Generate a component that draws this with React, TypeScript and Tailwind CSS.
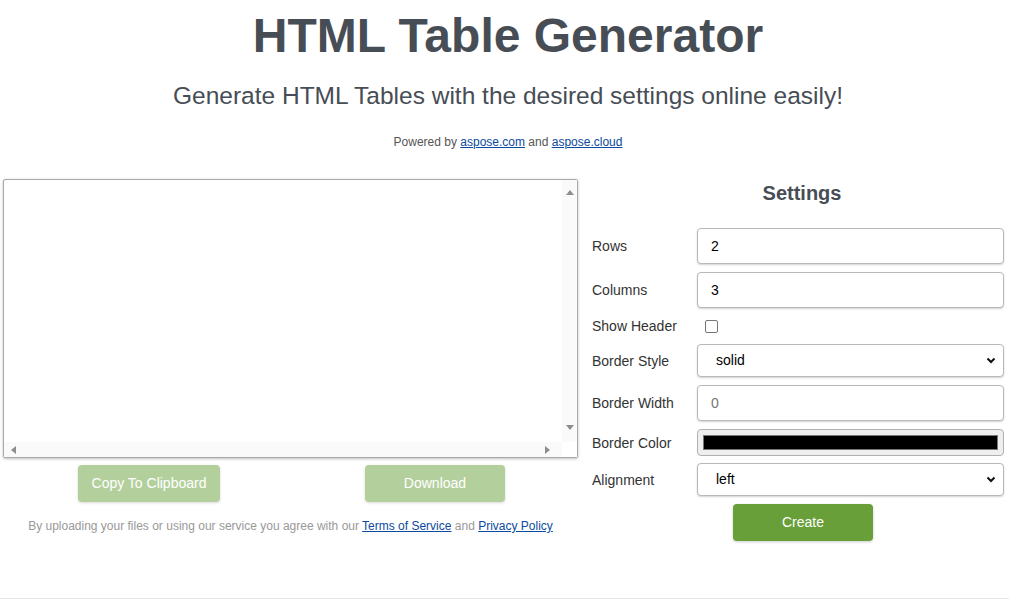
import React from "react";

const labelClass = "w-[105px] shrink-0 text-[14px] leading-[16px] text-[#333]";
const fieldClass =
  "w-[307px] rounded-[4px] border border-[#b9b9b9] bg-white shadow-[0_1px_2px_rgba(0,0,0,0.18)]";

function Chevron() {
  return (
    <svg width="10" height="7" viewBox="0 0 10 7" className="mr-[7px]">
      <path d="M1.5 1.5l3.5 3.5 3.5-3.5" fill="none" stroke="#111" strokeWidth="2" />
    </svg>
  );
}

function Arrow({ dir }: { dir: "up" | "down" | "left" | "right" }) {
  const points = {
    up: "0,5 4,0 8,5",
    down: "0,0 8,0 4,5",
    left: "5,0 5,8 0,4",
    right: "0,0 0,8 5,4",
  }[dir];
  const vertical = dir === "up" || dir === "down";
  return (
    <svg width={vertical ? 8 : 5} height={vertical ? 5 : 8} viewBox={vertical ? "0 0 8 5" : "0 0 5 8"}>
      <polygon points={points} fill="#8e8e8e" />
    </svg>
  );
}

function Row({ label, children, className = "" }: { label: string; children: React.ReactNode; className?: string }) {
  return (
    <div className={`flex items-center ${className}`}>
      <span className={labelClass}>{label}</span>
      {children}
    </div>
  );
}

export default function App() {
  return (
    <div className="h-[599px] border-b border-[#e6e6e6] bg-white font-['Liberation_Sans',Arial,sans-serif]">
      <header className="pl-[7px] text-center text-[#474d55]">
        <h1 className="pt-[12px] text-[48px] font-bold leading-[48px]">HTML Table Generator</h1>
        <p className="mt-[24px] text-[24.5px] leading-[24px]">
          Generate HTML Tables with the desired settings online easily!
        </p>
        <p className="mt-[28px] text-[12px] leading-[12px] text-[#555]">
          Powered by{" "}
          <a href="#" className="text-[#0b4a9e] underline">
            aspose.com
          </a>{" "}
          and{" "}
          <a href="#" className="text-[#0b4a9e] underline">
            aspose.cloud
          </a>
        </p>
      </header>

      <div className="mt-[31px] flex gap-[14px] px-[3px]">
        {/* output area */}
        <div className="w-[575px] shrink-0">
          <div className="flex h-[279px] flex-col rounded-[2px] border border-[#a9a9a9] bg-white shadow-[0_1px_3px_rgba(0,0,0,0.25)]">
            <div className="flex flex-1">
              <div className="flex-1" />
              <div className="flex w-[15px] flex-col items-center justify-between bg-[#fafafa] pt-[10px] pb-[12px]">
                <Arrow dir="up" />
                <Arrow dir="down" />
              </div>
            </div>
            <div className="flex h-[15px]">
              <div className="flex flex-1 items-center justify-between bg-[#fafafa] pl-[7px] pr-[12px]">
                <Arrow dir="left" />
                <Arrow dir="right" />
              </div>
              <div className="w-[15px] bg-white" />
            </div>
          </div>

          <div className="mt-[7px] grid grid-cols-2 pl-[3px]">
            <div className="flex justify-center">
              <button className="h-[37px] min-w-[140px] rounded-[4px] bg-[#b3d09c] px-[14px] text-[14px] text-white shadow-[0_1px_3px_rgba(0,0,0,0.15)]">
                Copy To Clipboard
              </button>
            </div>
            <div className="flex justify-center">
              <button className="h-[37px] min-w-[140px] rounded-[4px] bg-[#b3d09c] px-[14px] text-[14px] text-white shadow-[0_1px_3px_rgba(0,0,0,0.15)]">
                Download
              </button>
            </div>
          </div>

          <p className="mt-[18px] text-center text-[12px] leading-[12px] text-[#999]">
            By uploading your files or using our service you agree with our{" "}
            <a href="#" className="text-[#0b4a9e] underline">
              Terms of Service
            </a>{" "}
            and{" "}
            <a href="#" className="text-[#0b4a9e] underline">
              Privacy Policy
            </a>
          </p>
        </div>

        {/* settings form */}
        <div className="w-[413px] shrink-0">
          <h2 className="pt-[4px] pl-[7px] text-center text-[20px] font-bold leading-[20px] text-[#474d55]">
            Settings
          </h2>

          <Row label="Rows" className="mt-[25px]">
            <div className={`${fieldClass} flex h-[36px] items-center pl-[13px] text-[14px] text-black`}>2</div>
          </Row>
          <Row label="Columns" className="mt-[8px]">
            <div className={`${fieldClass} flex h-[36px] items-center pl-[13px] text-[14px] text-black`}>3</div>
          </Row>
          <Row label="Show Header" className="mt-[8px] h-[20px]">
            <div className="ml-[8px] h-[13px] w-[13px] rounded-[2px] border border-[#767676] bg-white" />
          </Row>
          <Row label="Border Style" className="mt-[8px]">
            <div className={`${fieldClass} flex h-[33px] items-center justify-between pl-[18px] text-[14px] text-black`}>
              <span>solid</span>
              <Chevron />
            </div>
          </Row>
          <Row label="Border Width" className="mt-[8px]">
            <div className={`${fieldClass} flex h-[36px] items-center pl-[13px] text-[14px] text-[#757575]`}>0</div>
          </Row>
          <Row label="Border Color" className="mt-[8px]">
            <div className="flex h-[27px] w-[307px] items-center rounded-[4px] border border-[#b0b0b0] bg-[#efefef] px-[5px]">
              <div className="h-[15px] flex-1 border border-[#777] bg-black" />
            </div>
          </Row>
          <Row label="Alignment" className="mt-[7px]">
            <div className={`${fieldClass} flex h-[33px] items-center justify-between pl-[18px] text-[14px] text-black`}>
              <span>left</span>
              <Chevron />
            </div>
          </Row>

          <div className="mt-[8px] flex justify-center pl-[9px]">
            <button className="h-[37px] w-[140px] rounded-[4px] bg-[#689f38] text-[14px] text-white shadow-[0_1px_3px_rgba(0,0,0,0.2)]">
              Create
            </button>
          </div>
        </div>
      </div>
    </div>
  );
}
